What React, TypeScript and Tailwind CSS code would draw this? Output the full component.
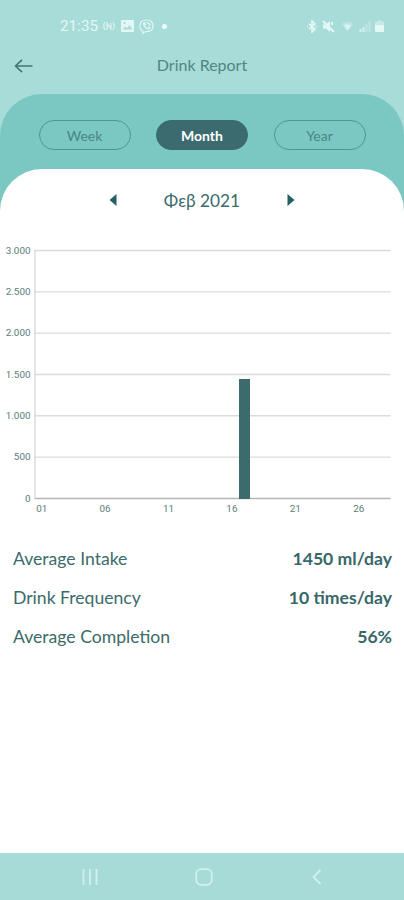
import { clsx } from "clsx";

const TABS = [
  { label: "Week", active: false },
  { label: "Month", active: true },
  { label: "Year", active: false },
];

const STATS = [
  { label: "Average Intake", value: "1450 ml/day" },
  { label: "Drink Frequency", value: "10 times/day" },
  { label: "Average Completion", value: "56%" },
];

const Y_TICKS = ["3.000", "2.500", "2.000", "1.500", "1.000", "500", "0"];
const X_TICKS = ["01", "06", "11", "16", "21", "26"];

export default function App() {
  return (
    <div className="flex h-[900px] w-[404px] flex-col overflow-hidden bg-[#a7dcd8] font-['Lato','Noto_Sans',sans-serif] text-[#3b6b6b]">
      <StatusBar />
      <header className="grid h-[44px] grid-cols-[1fr_auto_1fr] items-center px-[14px] pb-[14px]">
        <svg width="20" height="16" viewBox="0 0 20 16" fill="none" stroke="#3f7775" strokeWidth="1.6" className="mt-[2px]">
          <path d="M18.5 8H1.5M8 1.8L1.5 8L8 14.2" />
        </svg>
        <h1 className="text-[16px] leading-5 text-[#4f8683]">Drink Report</h1>
      </header>

      <main className="flex flex-1 flex-col rounded-t-[42px] bg-[#7bc8c2]">
        <nav className="flex h-[75px] items-start justify-between px-[38.5px] pt-[26px]">
          {TABS.map((tab) => (
            <button
              key={tab.label}
              className={clsx(
                "h-[30px] w-[92px] rounded-full border text-[14px] leading-[29px]",
                tab.active
                  ? "border-[#3b6b6e] bg-[#3b6b6e] font-bold text-white"
                  : "border-[#4c9693] text-[#488783]"
              )}
            >
              {tab.label}
            </button>
          ))}
        </nav>

        <section className="flex-1 rounded-t-[42px] bg-white">
          <div className="flex h-[64px] items-center justify-center">
            <svg width="8" height="12" viewBox="0 0 8 12" className="mb-[2px]">
              <path d="M7.5 0V12L0.5 6Z" fill="#236262" />
            </svg>
            <span className="w-[170px] text-center text-[17.3px]">Φεβ 2021</span>
            <svg width="8" height="12" viewBox="0 0 8 12" className="mb-[2px]">
              <path d="M0.500 0V12L7.500 6Z" fill="#236262" />
            </svg>
          </div>
          <Chart />
          <dl className="flex flex-col pl-[13px] pr-[12px] pt-[14px]">
            {STATS.map((stat) => (
              <div key={stat.label} className="flex h-[39.4px] items-center justify-between text-[17.6px]">
                <dt>{stat.label}</dt>
                <dd className="font-bold text-[#376868]">{stat.value}</dd>
              </div>
            ))}
          </dl>
        </section>
      </main>

      <NavBar />
    </div>
  );
}

function StatusBar() {
  return (
    <div className="flex h-[50px] items-center justify-between pl-[60px] pr-[20px] pt-[2px] font-['Roboto',sans-serif] text-[#e3f7f5]">
      <div className="flex items-center">
        <span className="w-[42px] text-[15.3px] leading-5">21:35</span>
        {/* broadcast */}
        <svg width="14" height="12" viewBox="0 0 14 12" fill="none" stroke="currentColor" strokeWidth="1.4" opacity="0.75">
          <path d="M3 2Q0.5 6 3 10M11 2Q13.500 6 11 10M5 10V3L9 9V3M5 6H9" />
        </svg>
        {/* gallery */}
        <svg width="13" height="12" viewBox="0 0 13 12" className="ml-[5px]">
          <path
            fill="currentColor"
            fillRule="evenodd"
            d="M1 0H12Q13 0 13 1V11Q13 12 12 12H1Q0 12 0 11V1Q0 0 1 0ZM1.500 9.500H11.500L8.500 5L6 8L4 6.500ZM2.500 2V4H4.500V2Z"
          />
        </svg>
        {/* viber */}
        <svg width="15" height="15" viewBox="0 0 15 15" fill="none" stroke="currentColor" strokeWidth="1.2" className="ml-[5px]">
          <path d="M7.500 1C3 1 1 3 1 7C1 10 2 11.500 4 12V14.300L6.500 12.500C12 12.800 14 11 14 7C14 3 12 1 7.500 1Z" />
          <path d="M4.500 4C4.500 7 7 9.800 10 10L10.800 8.700L9 7.700M4.500 4L5.500 3.600L6.500 5.200L5.800 6M8 3.600Q10.800 4 11 6.800" />
        </svg>
        <span className="ml-[8px] h-[5px] w-[5px] rounded-full bg-[#f0fcfa]" />
      </div>

      <div className="flex items-center">
        {/* bluetooth */}
        <svg width="12" height="13" viewBox="0 0 12 13" fill="none" stroke="currentColor" strokeWidth="1.7">
          <path d="M3 3.800L9 9L6 12V1L9 4L3 9.200M1 6.500H2M10 6.500H11" />
        </svg>
        {/* muted */}
        <svg width="13" height="13" viewBox="0 0 13 13" className="ml-[4px]">
          <path d="M1 4.500H4L8 1V12L4 8.500H1Z" fill="currentColor" />
          <path d="M1 1L12 12M10 2V5" stroke="currentColor" strokeWidth="2" />
        </svg>
        {/* wifi */}
        <svg width="13" height="11" viewBox="0 0 13 11" className="ml-[6px]">
          <path d="M0.500 3Q6.500 -1.500 12.500 3L6.500 10.500Z" fill="currentColor" opacity="0.35" />
          <path d="M3 4.500Q6.500 2 10 4.500L6.500 9Z" fill="currentColor" opacity="0.8" />
        </svg>
        {/* signal */}
        <svg width="12" height="11" viewBox="0 0 12 11" fill="currentColor" className="ml-[5px]">
          <path d="M0.500 8H2.500V11H0.500ZM3.500 6H5.500V11H3.500Z" opacity="0.8" />
          <path d="M6.500 3H8.500V11H6.500ZM9.500 0H11.500V11H9.500Z" opacity="0.4" />
        </svg>
        {/* battery */}
        <svg width="9" height="12" viewBox="0 0 9 12" fill="currentColor" className="ml-[4px]">
          <path d="M3 0H6V1.500H8Q9 1.500 9 2.500V5H0V2.500Q0 1.500 1 1.500H3Z" opacity="0.5" />
          <path d="M0 5H9V11Q9 12 8 12H1Q0 12 0 11Z" />
        </svg>
      </div>
    </div>
  );
}

function Chart() {
  return (
    <svg width="404" height="292" viewBox="0 233 404 292" className="block font-['Roboto',sans-serif] text-[9.9px]" fill="#5b7c7a">
      {Y_TICKS.map((tick, i) => {
        const y = 250.5 + i * 41.33;
        return (
          <g key={tick}>
            <path d={`M34.5 ${y}H390.500`} stroke={i === 6 ? "#b3b7b7" : "#d9dcdc"} strokeWidth="1.4" />
            <text x="30.500" y={y + 3.3} textAnchor="end">
              {tick}
            </text>
          </g>
        );
      })}
      <path d="M35 250V499" stroke="#d3d6d6" strokeWidth="1.2" />
      {X_TICKS.map((tick, i) => (
        <text key={tick} x={41.7 + i * 63.4} y="512" textAnchor="middle">
          {tick}
        </text>
      ))}
      <rect x="239" y="379" width="11" height="120" fill="#3b6b6c" />
    </svg>
  );
}

function NavBar() {
  return (
    <div className="flex h-[47px] items-center justify-between bg-[#a6dbd7] pl-[82px] pr-[81px] text-[#d3f0ed]">
      <svg width="16" height="16" viewBox="0 0 16 16" stroke="currentColor" strokeWidth="1.800">
        <path d="M1.500 0V16M8 0V16M14.500 0V16" />
      </svg>
      <svg width="18" height="18" viewBox="0 0 18 18" fill="none" stroke="currentColor" strokeWidth="1.800" className="mr-[2px]">
        <rect x="1.200" y="1.200" width="15.600" height="15.600" rx="5" />
      </svg>
      <svg width="12" height="16" viewBox="0 0 12 16" fill="none" stroke="currentColor" strokeWidth="1.800">
        <path d="M9.500 1L2.500 8L9.500 15" />
      </svg>
    </div>
  );
}
